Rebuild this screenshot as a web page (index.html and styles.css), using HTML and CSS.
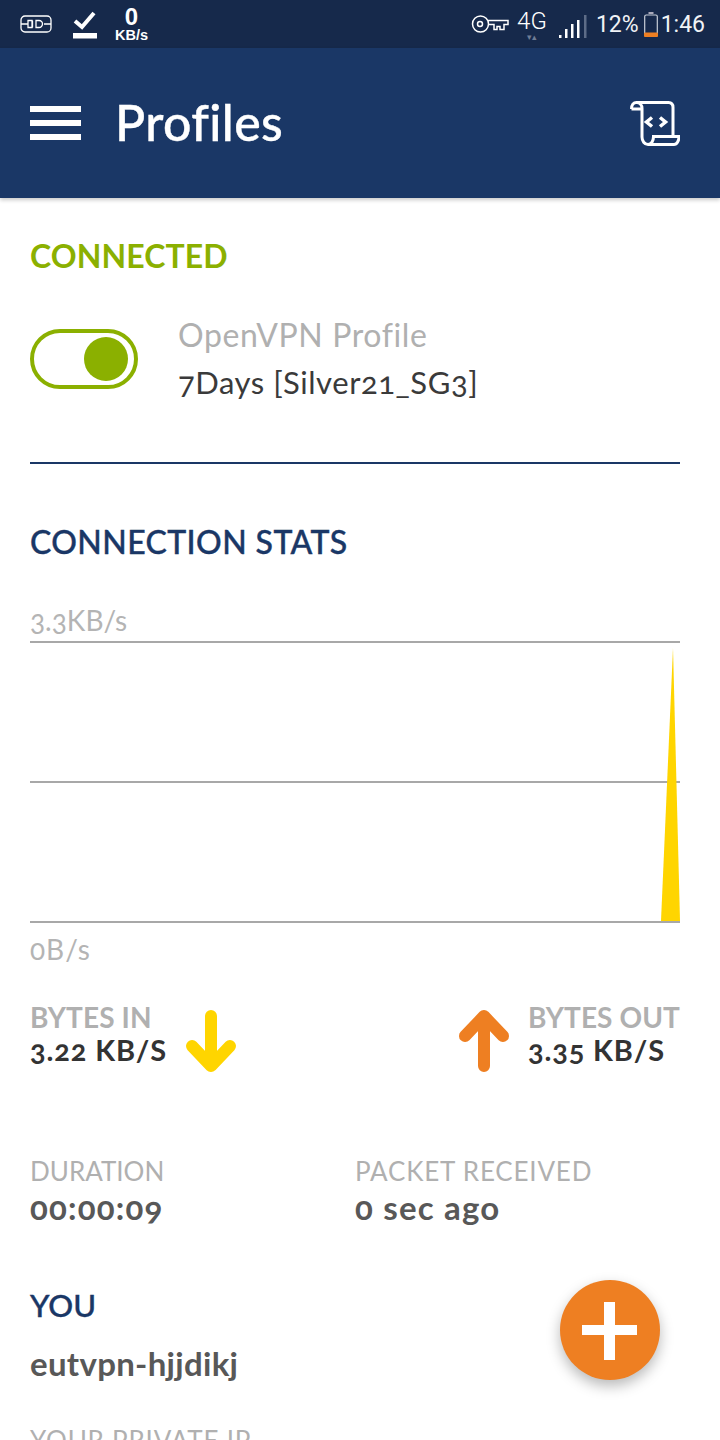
FILE: index.html
```html
<!DOCTYPE html>
<html lang="en">
<head>
<meta charset="utf-8">
<title>Profiles</title>
<link rel="stylesheet" href="styles.css">
</head>
<body>
<div class="page">
  <div class="statusbar">
    <div class="status-left">
      <svg class="ic-vpn" viewBox="0 0 32 18" fill="none" stroke="#fff" stroke-width="1.3"><rect x="1" y="1" width="30" height="16" rx="4"/><path d="M1 9h7M24 9h7M8 5.500h4v7h-4zM12.500 5.500v7M16 5.500h3a3.500 3.500 0 0 1 0 7h-3z"/></svg>
      <svg class="ic-check" viewBox="0 0 24 30"><path d="M2 12l7 6L21 4" fill="none" stroke="#fff" stroke-width="4"/><rect y="24" width="24" height="5.500" fill="#fff"/></svg>
      <div class="speed"><span class="speed-num">0</span><span class="speed-unit">KB/s</span></div>
    </div>
    <div class="status-right">
      <svg class="ic-key" viewBox="0 0 38 20" fill="none" stroke="#fff" stroke-width="1.500"><circle cx="9.500" cy="10" r="8"/><circle cx="9" cy="10" r="2.500"/><path d="M17 6.500h20v4h-4v5h-4v-3h-3v3h-3v-5h-6"/></svg>
      <div class="net"><span class="net-4g">4G</span><span class="net-arrows">▾▴</span></div>
      <svg class="ic-signal" viewBox="0 0 28 24"><rect x="0" y="20" width="2.500" height="3" fill="#fff"/><rect x="6" y="14" width="2.500" height="9" fill="#fff"/><rect x="12" y="9" width="2.500" height="14" fill="#fff"/><rect x="18" y="5" width="2.500" height="18" fill="#fff"/><rect x="25" y="0" width="2.500" height="23" fill="#5d6c87"/></svg>
      <span class="stat-text pct">12%</span>
      <svg class="ic-batt" viewBox="0 0 14 25"><rect x="4.500" y="0" width="5" height="2" fill="#aab"/><rect x="0.700" y="3" width="12.600" height="21.300" rx="1.500" fill="none" stroke="#c8ced8" stroke-width="1.200"/><rect x="0" y="20.500" width="14" height="4.500" rx="1" fill="#ee7f22"/></svg>
      <span class="stat-text">1:46</span>
    </div>
  </div>

  <header class="appbar">
    <div class="burger"><i></i><i></i><i></i></div>
    <h1 class="title">Profiles</h1>
    <svg class="ic-script" viewBox="0 0 50 46" fill="none" stroke="#fff" stroke-width="3"><path d="M1.500 9c0-4 2-6.500 5-6.500h32c3 0 4.500 2 4.500 5v29"/><path d="M1.500 9H12M6.500 2.500c3.500 0 5.500 2.500 5.500 6V37c0 4 2.500 7.500 6 7.500h26c3 0 5-4 5-8H23.500c0 4-2 8-5.500 8"/><path d="M22 17.500l-5.500 4.500 5.500 4.500M30 17.500l5.500 4.500-5.500 4.500" stroke-width="3.500"/></svg>
  </header>

  <main class="content">
    <h2 class="status-heading">CONNECTED</h2>
    <div class="profile-row">
      <div class="toggle"><span class="knob"></span></div>
      <div class="profile-text">
        <div class="profile-label">OpenVPN Profile</div>
        <div class="profile-name">7Days [Silver21_SG3]</div>
      </div>
    </div>
    <div class="divider"></div>

    <h2 class="section-heading stats-heading">CONNECTION STATS</h2>
    <div class="axis-label top">3.3KB/s</div>
    <svg class="chart" viewBox="0 0 650 282" width="650" height="282">
      <path d="M0 1h650M0 141h650M0 281h650" stroke="#a8a8a8" stroke-width="2" fill="none"/>
      <path d="M631 280L643 7 650 280z" fill="#ffd500"/>
    </svg>
    <div class="axis-label bottom">0B/s</div>

    <div class="bytes-row">
      <div class="bytes">
        <div class="bytes-text">
          <div class="bytes-label">BYTES IN</div>
          <div class="bytes-value">3.22 KB/S</div>
        </div>
        <svg class="arrow" viewBox="0 0 50 62" fill="none" stroke="#ffd500" stroke-width="12" stroke-linecap="round" stroke-linejoin="round"><path d="M25 6v50M6 36l19 20 19-20"/></svg>
      </div>
      <div class="bytes">
        <svg class="arrow" viewBox="0 0 50 62" fill="none" stroke="#ee7f22" stroke-width="12" stroke-linecap="round" stroke-linejoin="round"><path d="M25 56V6M6 26L25 6l19 20"/></svg>
        <div class="bytes-text">
          <div class="bytes-label">BYTES OUT</div>
          <div class="bytes-value">3.35 KB/S</div>
        </div>
      </div>
    </div>

    <div class="info-row">
      <div class="info">
        <div class="info-label">DURATION</div>
        <div class="info-value">00:00:09</div>
      </div>
      <div class="info">
        <div class="info-label wide">PACKET RECEIVED</div>
        <div class="info-value">0 sec ago</div>
      </div>
    </div>

    <h2 class="section-heading you-heading">YOU</h2>
    <div class="info-value host">eutvpn-hjjdikj</div>
    <div class="info-label wide private">YOUR PRIVATE IP</div>
  </main>

  <button class="fab" type="button" aria-label="Add"><span class="fab-h"></span><span class="fab-v"></span></button>
</div>
</body>
</html>
```
FILE: styles.css
```css
* { box-sizing: border-box; }
html, body { margin: 0; padding: 0; background: #fff; }
body { font-family: "Lato", "Open Sans", sans-serif; }
.page { position: relative; width: 720px; height: 1440px; overflow: hidden; background: #fff; }
.content { font-variant-numeric: oldstyle-nums; }

.statusbar { height: 48px; background: #16294b; display: flex; justify-content: space-between; align-items: center; padding: 0 15px 0 20px; color: #fff; }
.status-left, .status-right { display: flex; align-items: center; }
.ic-vpn { width: 32px; height: 18px; }
.ic-check { width: 24px; height: 30px; margin-left: 21px; }
.speed { display: flex; flex-direction: column; align-items: center; margin-left: 18px; font-family: "Liberation Sans", sans-serif; font-weight: 700; }
.speed-num { font-size: 24px; line-height: 22px; height: 22px; }
.speed-unit { font-size: 14.500px; line-height: 14px; height: 14px; }
.ic-key { width: 38px; height: 20px; margin-right: 8px; }
.net { display: flex; flex-direction: column; align-items: center; width: 30px; font-family: "Roboto", sans-serif; line-height: 1; margin-right: 12px; padding-top: 2px; }
.net-4g { font-size: 24px; font-weight: 300; height: 24px; line-height: 24px; }
.net-arrows { font-size: 9px; height: 9px; color: #6f7d96; letter-spacing: 0; }
.ic-signal { width: 28px; height: 24px; margin-top: 5px; margin-right: 9px; }
.stat-text { font-family: "Roboto", sans-serif; font-size: 23px; font-weight: 400; color: #f1f3f6; }
.ic-batt { width: 14px; height: 25px; margin: 0 3px 0 5px; }

.appbar { height: 150px; background: #1a3766; display: flex; align-items: center; padding: 0 40px 0 30px; box-shadow: 0 2px 4px rgba(0,0,0,.22); position: relative; }
.burger { width: 51px; display: flex; flex-direction: column; gap: 8px; }
.burger i { display: block; height: 6px; background: #fff; }
.title { margin: 0 0 2px 34px; flex: 1; font-size: 50px; font-weight: 500; color: #fff; line-height: 1; letter-spacing: .4px; -webkit-text-stroke: .4px; }
.ic-script { width: 50px; height: 46px; }

.content { padding: 0 40px 0 30px; }
h2 { margin: 0; }
.status-heading { padding-top: 41px; font-size: 32px; line-height: 34px; font-weight: 700; color: #8bb000; letter-spacing: .1px; }
.profile-row { display: flex; margin-top: 45px; height: 96px; }
.toggle { width: 108px; height: 60px; margin-top: 11px; border: 4px solid #8bb000; border-radius: 30px; display: flex; align-items: center; justify-content: flex-end; padding-right: 6px; }
.knob { width: 44px; height: 44px; border-radius: 50%; background: #8bb000; }
.profile-text { margin-left: 40px; margin-top: -1px; }
.profile-label { font-size: 32px; line-height: 36px; color: #b0b0b0; letter-spacing: .6px; }
.profile-name { margin-top: 11px; font-size: 31px; line-height: 36px; color: #3a3a3a; letter-spacing: .55px; }
.divider { height: 2px; background: #1a3766; margin-top: 48px; }

.section-heading { font-size: 31px; line-height: 36px; font-weight: 500; color: #1a3766; -webkit-text-stroke: .4px; }
.stats-heading { margin-top: 60px; font-size: 32px; letter-spacing: .4px; }
.axis-label { font-size: 28px; line-height: 30px; color: #b4b4b4; }
.axis-label.top { margin-top: 45px; }
.chart { display: block; margin-top: 6px; }
.axis-label.bottom { margin-top: 11px; letter-spacing: 1px; }

.bytes-row { display: flex; justify-content: space-between; margin-top: 38px; }
.bytes { display: flex; align-items: flex-start; }
.bytes-text { display: flex; flex-direction: column; }
.bytes-label { font-size: 28px; line-height: 30px; font-weight: 700; color: #b0b0b0; letter-spacing: .1px; }
.bytes-value { font-size: 29px; line-height: 36px; font-weight: 700; color: #333; letter-spacing: .85px; }
.arrow { width: 50px; height: 62px; margin: 8px 19px 0 19px; }

.info-row { display: flex; margin-top: 84px; }
.info { width: 326px; }
.info-label { font-size: 26px; line-height: 30px; color: #b0b0b0; }
.info-label.wide { letter-spacing: .8px; }
.info-value { font-size: 33px; line-height: 36px; font-weight: 700; color: #585858; margin-top: 3px; letter-spacing: 1.2px; }
.you-heading { margin-top: 62px; }
.host { margin-top: 22px; letter-spacing: .3px; }
.private { margin-top: 44px; }

.fab { position: absolute; left: 560px; top: 1280px; width: 100px; height: 100px; border: 0; border-radius: 50%; padding: 0; background: #ee7f22; box-shadow: 0 6px 14px rgba(0,0,0,.28); }
.fab-h { position: absolute; left: 22px; top: 45px; width: 55px; height: 10px; background: #fff; }
.fab-v { position: absolute; left: 44px; top: 22px; width: 11px; height: 58px; background: #fff; }
```
